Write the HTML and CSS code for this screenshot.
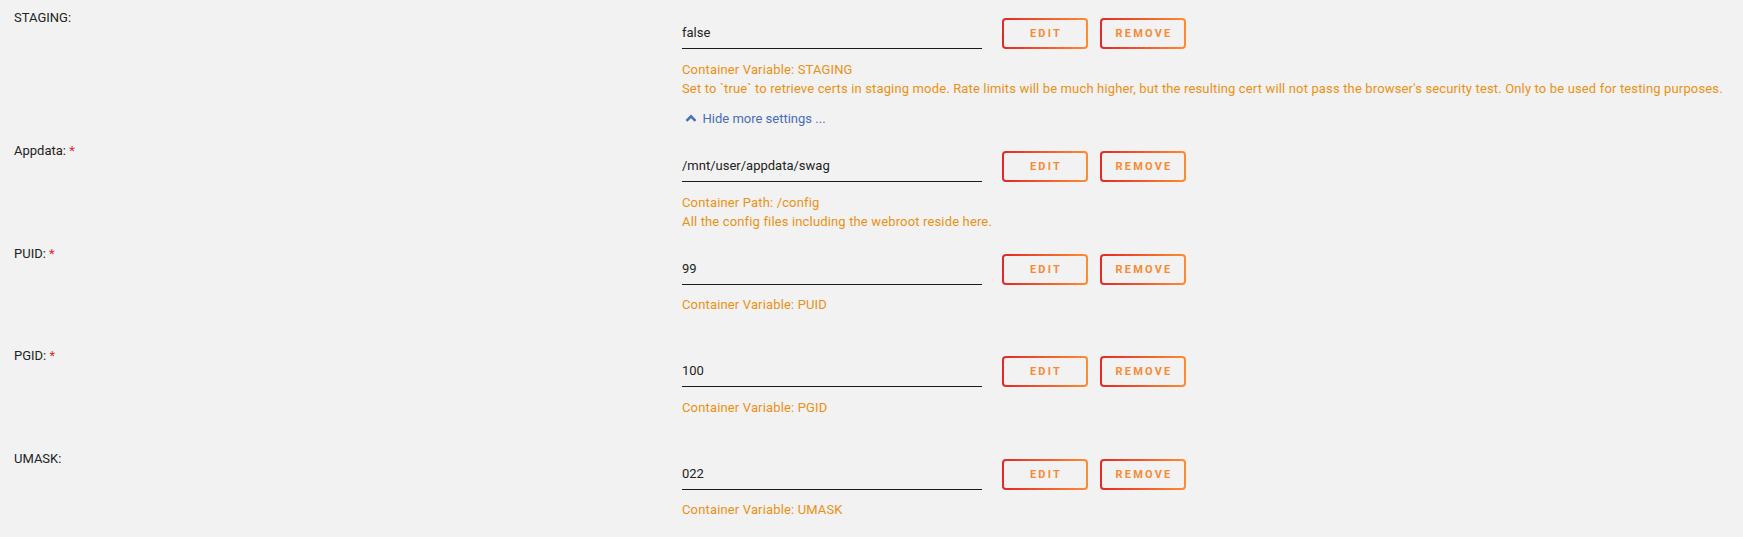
FILE: index.html
```html
<!DOCTYPE html>
<html lang="en">
<head>
<meta charset="utf-8">
<title>Container settings</title>
<link rel="stylesheet" href="styles.css">
</head>
<body>
<div class="settings">
  <div class="row">
    <div class="label">STAGING:</div>
    <div class="field">
      <div class="controls">
        <input class="value" type="text" value="false">
        <button class="btn">Edit</button>
        <button class="btn">Remove</button>
      </div>
      <div class="desc">
        <div>Container Variable: STAGING</div>
        <div>Set to `true` to retrieve certs in staging mode. Rate limits will be much higher, but the resulting cert will not pass the browser's security test. Only to be used for testing purposes.</div>
      </div>
      <a class="toggle" href="#">
        <svg class="chev" width="12" height="8" viewBox="0 0 12 8"><polyline points="1.5,6.8 6,2.3 10.5,6.8" fill="none" stroke="#486dba" stroke-width="2.4"/></svg>
        <span>Hide more settings ...</span>
      </a>
    </div>
  </div>

  <div class="row">
    <div class="label">Appdata: <span class="req">*</span></div>
    <div class="field">
      <div class="controls">
        <input class="value" type="text" value="/mnt/user/appdata/swag">
        <button class="btn">Edit</button>
        <button class="btn">Remove</button>
      </div>
      <div class="desc">
        <div>Container Path: /config</div>
        <div>All the config files including the webroot reside here.</div>
      </div>
    </div>
  </div>

  <div class="row">
    <div class="label">PUID: <span class="req">*</span></div>
    <div class="field">
      <div class="controls">
        <input class="value" type="text" value="99">
        <button class="btn">Edit</button>
        <button class="btn">Remove</button>
      </div>
      <div class="desc">
        <div>Container Variable: PUID</div>
      </div>
    </div>
  </div>

  <div class="row">
    <div class="label">PGID: <span class="req">*</span></div>
    <div class="field">
      <div class="controls">
        <input class="value" type="text" value="100">
        <button class="btn">Edit</button>
        <button class="btn">Remove</button>
      </div>
      <div class="desc">
        <div>Container Variable: PGID</div>
      </div>
    </div>
  </div>

  <div class="row">
    <div class="label">UMASK:</div>
    <div class="field">
      <div class="controls">
        <input class="value" type="text" value="022">
        <button class="btn">Edit</button>
        <button class="btn">Remove</button>
      </div>
      <div class="desc">
        <div>Container Variable: UMASK</div>
      </div>
    </div>
  </div>
</div>
</body>
</html>
```
FILE: styles.css
```css
html {
  overflow: hidden;
}

body {
  margin: 0;
  background: #f2f2f2;
  color: #222;
  font-family: Roboto, "Liberation Sans", sans-serif;
  font-size: 13px;
  line-height: 19px;
}

.settings {
  display: flex;
  flex-direction: column;
}

.row {
  display: grid;
  grid-template-columns: 682px 1fr;
  padding-bottom: 5px;
}

.label {
  padding-left: 14px;
  padding-top: 8px;
  color: #222;
}

.req {
  color: #e22828;
}

.field {
  display: flex;
  flex-direction: column;
  align-items: flex-start;
  padding-top: 18px;
}

.controls {
  display: flex;
  align-items: stretch;
  height: 31px;
}

.value {
  box-sizing: border-box;
  width: 300px;
  height: 31px;
  margin: 0 20px 0 0;
  padding: 0 0 1px 0;
  border: none;
  border-bottom: 1px solid #1a1a1a;
  background: transparent;
  color: #222;
  font-family: Roboto, "Liberation Sans", sans-serif;
  font-size: 13px;
  outline: none;
}

.btn {
  box-sizing: border-box;
  width: 86px;
  height: 31px;
  margin: 0 12px 0 0;
  padding: 0 0 0 2px;
  border: 2px solid transparent;
  border-radius: 4px;
  background: linear-gradient(#f2f2f2, #f2f2f2) padding-box,
              linear-gradient(90deg, #e22828, #ff8c2f) border-box;
  color: #f98a33;
  font-family: Roboto, "Liberation Sans", sans-serif;
  font-size: 11px;
  font-weight: 700;
  letter-spacing: 2.2px;
  text-transform: uppercase;
}

.desc {
  margin-top: 10.5px;
  min-height: 38px;
  color: #eb9112;
  letter-spacing: 0.15px;
}

.toggle {
  display: flex;
  align-items: center;
  gap: 6px;
  margin-top: 11.5px;
  padding-left: 2.5px;
  color: #486dba;
  text-decoration: none;
}

.chev {
  display: block;
  margin-top: -1px;
}
```
